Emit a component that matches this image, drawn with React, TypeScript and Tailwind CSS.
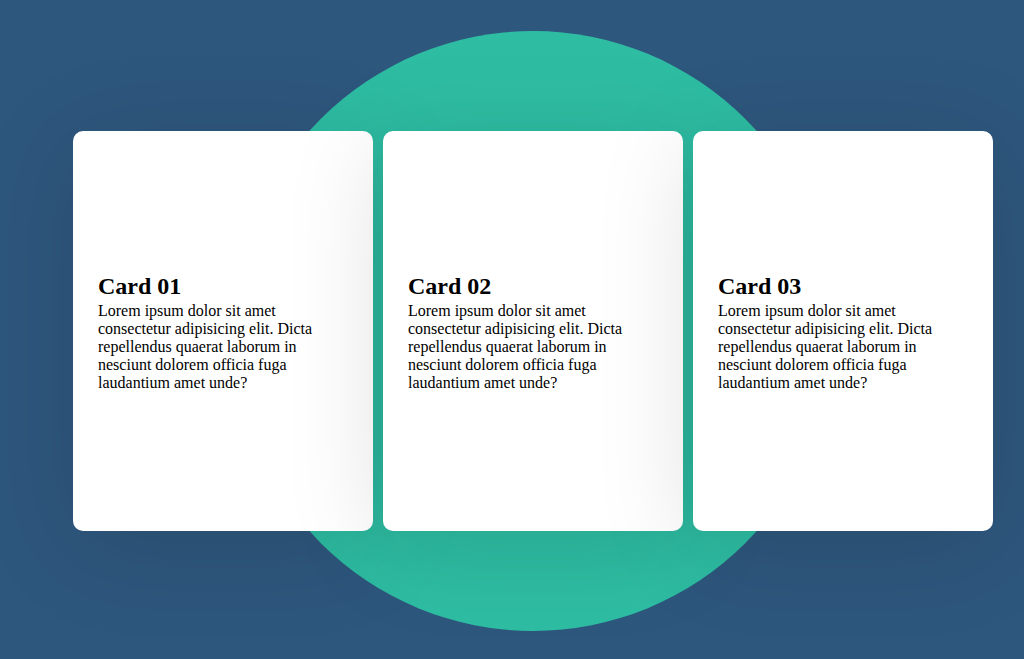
const cards = [
  { title: 'Card 01' },
  { title: 'Card 02' },
  { title: 'Card 03' },
];

const body =
  'Lorem ipsum dolor sit amet consectetur adipisicing elit. Dicta repellendus quaerat laborum in nesciunt dolorem officia fuga laudantium amet unde?';

export default function App() {
  return (
    <div className="min-h-screen w-full flex items-center justify-center bg-[#2e577d] pl-[42px] pt-[2px] font-['Liberation_Serif',serif] text-black">
      <div className="relative flex items-center justify-center">
        {/* decorative circle sits behind the cards */}
        <div className="absolute left-1/2 top-1/2 w-[600px] h-[600px] -translate-x-1/2 -translate-y-1/2 rounded-full bg-[#2ebda3]" />
        <div className="relative flex gap-[10px]">
          {cards.map((c) => (
            <div
              key={c.title}
              className="w-[300px] h-[400px] bg-white rounded-[10px] flex flex-col justify-center px-[25px] shadow-[0_15px_100px_rgba(0,0,0,0.13)]"
            >
              <h2 className="text-[24px] font-bold leading-[32px]">{c.title}</h2>
              <p className="text-[16px] leading-[18px]">{body}</p>
            </div>
          ))}
        </div>
      </div>
    </div>
  );
}
